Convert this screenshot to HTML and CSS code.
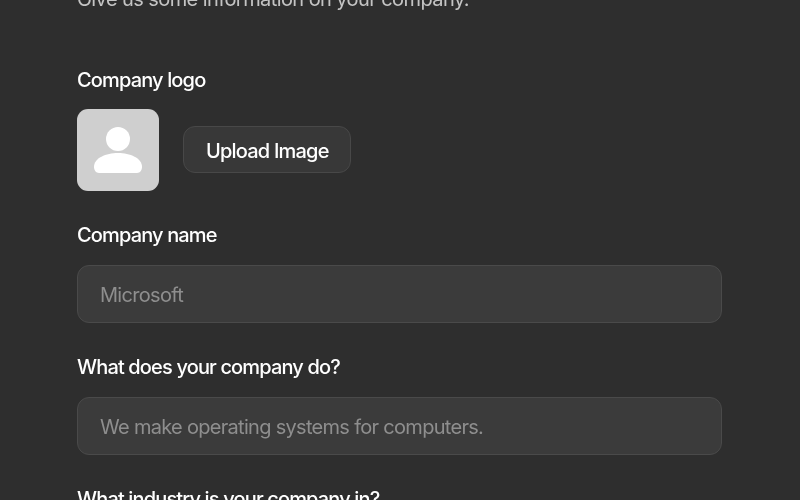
FILE: index.html
```html
<!DOCTYPE html>
<html lang="en">
<head>
  <meta charset="UTF-8">
  <meta name="viewport" content="width=device-width, initial-scale=1.0">
  <title>Company information</title>
  <link rel="stylesheet" href="styles.css">
</head>
<body>
  <div class="page">
    <p class="intro">Give us some information on your company.</p>

    <div class="field">
      <label class="label label-logo">Company logo</label>
      <div class="logo-row">
        <div class="avatar">
          <svg width="50" height="50" viewBox="0 0 50 50">
            <circle cx="25" cy="14" r="12" fill="#fff"/>
            <path d="M1 42c0-9 12-14 24-14s24 5 24 14c0 3-2 6-5 6H6c-3 0-5-3-5-6z" fill="#fff"/>
          </svg>
        </div>
        <button class="upload-button" type="button">Upload Image</button>
      </div>
    </div>

    <div class="field">
      <label class="label" for="companyName">Company name</label>
      <input class="text-input" type="text" id="companyName" placeholder="Microsoft">
    </div>

    <div class="field">
      <label class="label" for="companyDoes">What does your company do?</label>
      <input class="text-input" type="text" id="companyDoes" placeholder="We make operating systems for computers.">
    </div>

    <div class="field">
      <label class="label" for="companyIndustry">What industry is your company in?</label>
    </div>
  </div>
</body>
</html>
```

FILE: styles.css
```css
html, body {
  margin: 0;
  height: 100%;
  overflow: hidden;
  background: #2e2e2e;
}
.page {
  font-family: Inter, sans-serif;
  font-size: 20px;
  line-height: 24px;
  letter-spacing: -0.7px;
  color: #fff;
  margin-top: -13px;
  padding: 0 78px 0 77px;
  filter: blur(0.4px);
}
.intro {
  margin: 0 0 57px;
  color: #c4c4c4;
  letter-spacing: -0.58px;
}
.field {
  margin-bottom: 32px;
}
.label {
  display: block;
  margin-bottom: 18px;
  font-weight: 500;
  letter-spacing: -0.85px;
}
.label-logo {
  margin-bottom: 17px;
}
.logo-row {
  display: flex;
  align-items: center;
  gap: 24px;
}
.avatar {
  width: 82px;
  height: 82px;
  border-radius: 11px;
  background: #cfcfcf;
  display: flex;
  align-items: center;
  justify-content: center;
}
.upload-button {
  font: inherit;
  font-weight: 500;
  letter-spacing: -0.8px;
  color: #fff;
  height: 47px;
  margin-bottom: 1px;
  padding: 2px 21px 0 22px;
  background: #383838;
  border: 1px solid #484848;
  border-radius: 12px;
}
.text-input {
  display: block;
  box-sizing: border-box;
  width: 100%;
  height: 58px;
  padding: 2px 22px 0;
  font: inherit;
  letter-spacing: inherit;
  color: #fff;
  background: #3b3b3b;
  border: 1px solid #4a4a4a;
  border-radius: 12px;
}
.text-input::placeholder {
  color: #8e8e8e;
  opacity: 1;
}
```
